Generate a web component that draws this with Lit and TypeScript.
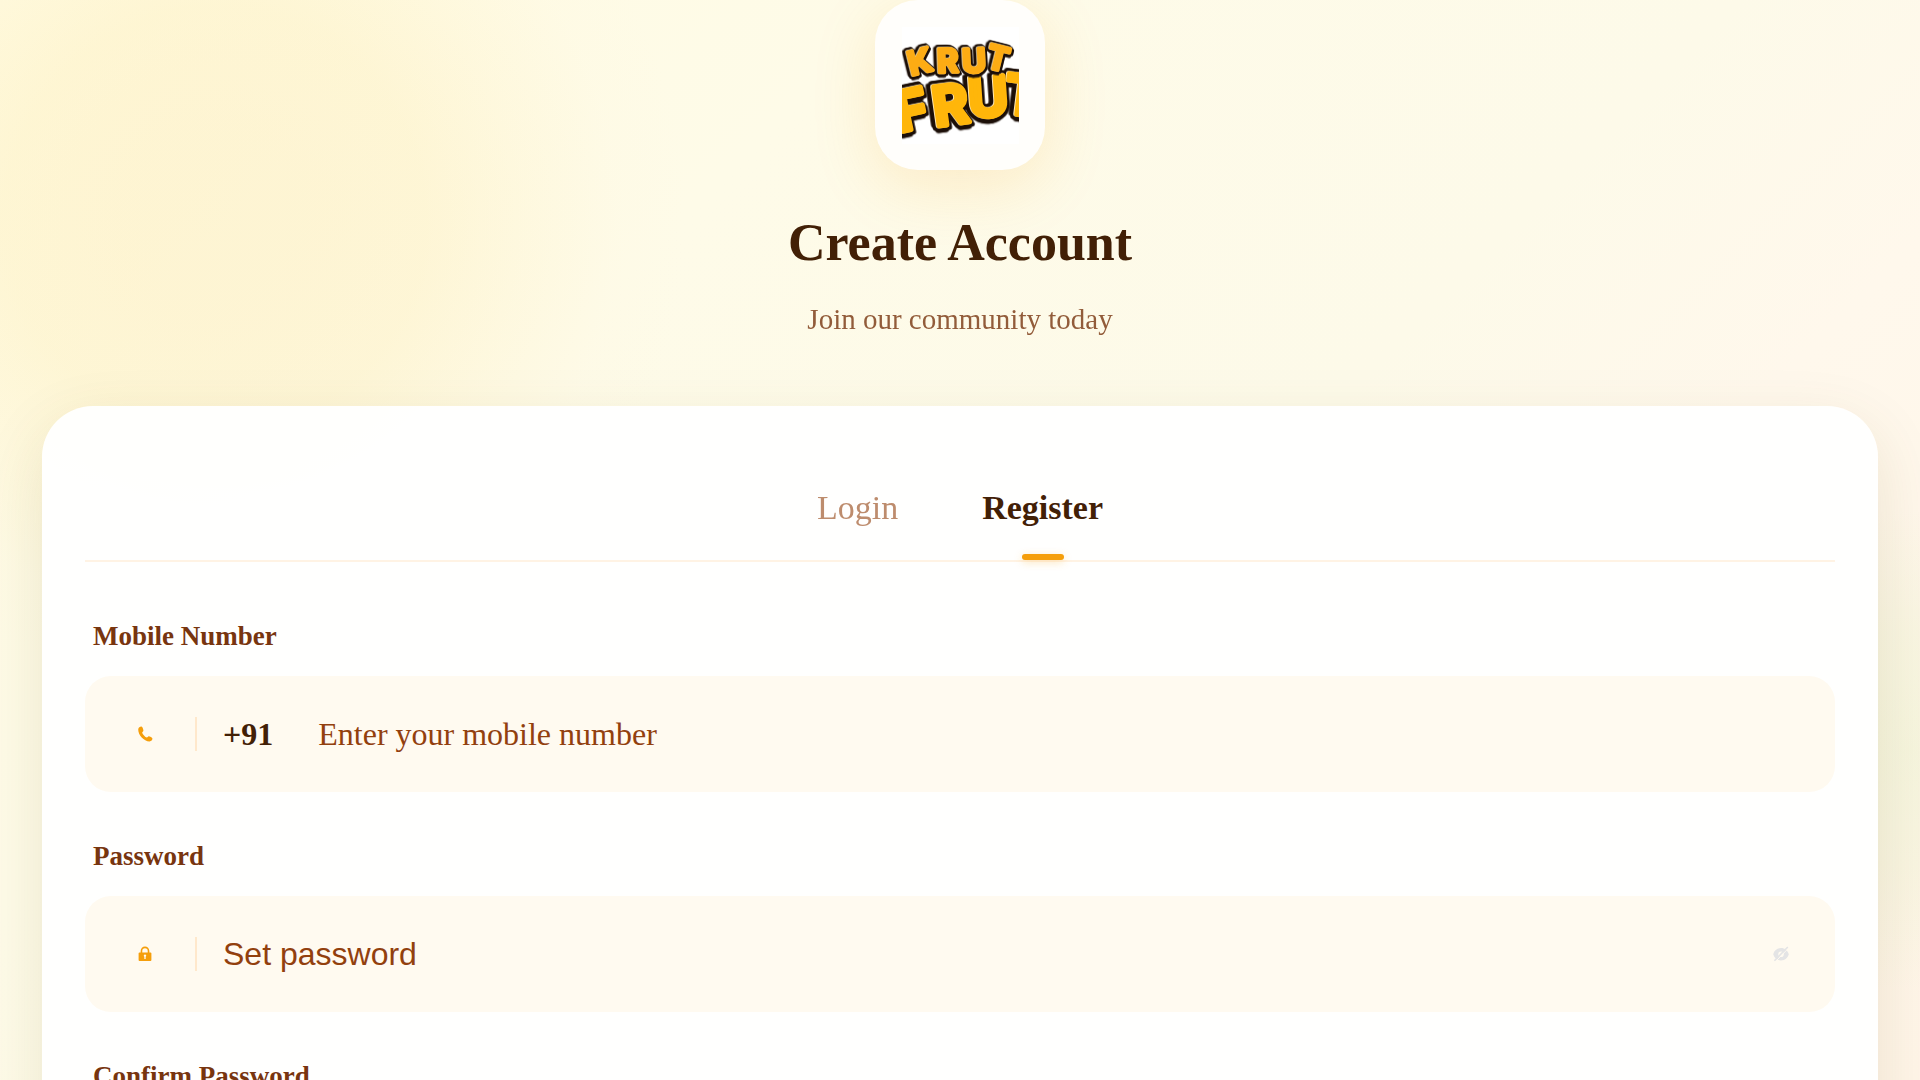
import { LitElement, html, css, svg } from "lit";
import { customElement, property, state } from "lit/decorators.js";

const phoneIcon = svg`<path d="M4.6 .7C3.3 .3 1 1.300 .8 3.600C.7 9.500 6.800 16.200 12.800 16.400C14.700 16.300 16 14.600 15.900 13.300C15.700 12.500 13.200 10.900 12 10.900C11.100 11 10.700 12.200 9.900 12.200C8.400 12 5.300 8.600 5 7.100C5 6.300 6.200 5.900 6.300 5C6.400 3.800 5.400 1 4.600 .7Z"/>`;

const lockIcon = svg`<path fill-rule="evenodd" d="M3.400 6.800V5.200a4.600 4.600 0 0 1 9.200 0v1.600h1.200c.6 0 1 .4 1 1v7.200c0 .6-.4 1-1 1H2.200c-.6 0-1-.4-1-1V7.800c0-.6.4-1 1-1zM5.100 6.800h5.800V5.200a2.900 2.900 0 0 0-5.800 0zM8 9a1.300 1.300 0 0 0-.7 2.400v2.400h1.400v-2.400A1.300 1.300 0 0 0 8 9z"/>`;

@customElement("brand-logo")
export class BrandLogo extends LitElement {
  static styles = css`
    :host {
      display: block;
    }
    .tile {
      display: flex;
      align-items: center;
      justify-content: center;
      width: 170px;
      height: 170px;
      border-radius: 43px;
      background: #fffefb;
      box-shadow: 0 16px 64px rgba(245, 158, 11, 0.16);
    }
    .mark {
      display: block;
      width: 117px;
      height: 117px;
      background: #fff;
    }
    .word {
      font-family: Inter, "Open Sans", sans-serif;
      font-weight: 700;
      text-anchor: middle;
      stroke-linejoin: round;
      fill: #ffb60a;
      stroke: #ffb60a;
    }
    .top {
      font-size: 98px;
      stroke-width: 10px;
      fill: #fdac14;
      stroke: #fdac14;
      filter: drop-shadow(-2px -1px 0 #ffe9b8) drop-shadow(-6px 5px 0 #1c0f08)
        drop-shadow(-4px -6px 0 #1c0f08) drop-shadow(6px 5px 0 #1c0f08);
    }
    .bottom {
      font-size: 164px;
      stroke-width: 14px;
      filter: drop-shadow(-3px -1px 0 #ffe9b8) drop-shadow(-9px 7px 0 #1c0f08)
        drop-shadow(-5px -9px 0 #1c0f08) drop-shadow(8px 7px 0 #1c0f08);
    }
  `;

  render() {
    return html`
      <div class="tile">
        <svg class="mark" viewBox="126 80 351 351" role="img" aria-label="Krut Frut">
          <g class="word bottom">
            <text transform="translate(166 386) rotate(-12)">F</text>
            <text transform="translate(280 372) rotate(-8)">R</text>
            <text transform="translate(388 348) rotate(-4)">U</text>
            <text transform="translate(482 344) rotate(7)">T</text>
          </g>
          <g class="word top">
            <text transform="translate(188 218) rotate(-14)">K</text>
            <text transform="translate(265 216) rotate(-2)">R</text>
            <text transform="translate(344 216) rotate(-3)">U</text>
            <text transform="translate(406 208) rotate(14)">T</text>
          </g>
        </svg>
      </div>
    `;
  }
}

@customElement("form-field")
export class FormField extends LitElement {
  @property() label = "";
  @property() kind = "password";
  @property() hint = "";
  @property() code = "";
  @state() private revealed = false;

  static styles = css`
    :host {
      display: flex;
      flex-direction: column;
      gap: 24px;
    }
    .label {
      padding-left: 8px;
      font-size: 27px;
      line-height: 32px;
      font-weight: 700;
      color: #78350f;
    }
    .box {
      display: flex;
      align-items: center;
      height: 116px;
      padding: 0 42px;
      box-sizing: border-box;
      border-radius: 26px;
      background: #fffaf0;
    }
    .lead {
      display: flex;
      justify-content: center;
      width: 36px;
      margin-right: 32px;
    }
    .icon {
      display: block;
      width: 16px;
      height: 16px;
      fill: #f59e0b;
    }
    .rule {
      width: 2px;
      height: 34px;
      margin-right: 26px;
      background: #ffe8cc;
    }
    .code {
      margin-right: 45px;
      font-size: 32px;
      line-height: 40px;
      font-weight: 700;
      color: #422006;
    }
    .input {
      flex: 1;
      min-width: 0;
      padding: 0;
      border: 0;
      outline: 0;
      background: transparent;
      font-family: "Liberation Serif", serif;
      font-size: 32px;
      line-height: 40px;
      color: #422006;
    }
    .input[type="password"] {
      font-family: "Liberation Sans", sans-serif;
    }
    .input::placeholder {
      color: #92400e;
      opacity: 1;
    }
    .toggle {
      display: flex;
      padding: 4px;
      border: 0;
      background: none;
      cursor: pointer;
    }
    .eye {
      display: block;
      width: 16px;
      height: 16px;
    }
  `;

  private toggle() {
    this.revealed = !this.revealed;
  }

  render() {
    const phone = this.kind === "tel";
    return html`
      <label class="label" for="control">${this.label}</label>
      <div class="box">
        <span class="lead">
          <svg class="icon" viewBox="0 0 16 17" aria-hidden="true">${phone ? phoneIcon : lockIcon}</svg>
        </span>
        <span class="rule"></span>
        ${this.code ? html`<span class="code">${this.code}</span>` : ""}
        <input
          class="input"
          id="control"
          type=${this.revealed ? "text" : this.kind}
          placeholder=${this.hint}
        />
        ${phone
          ? ""
          : html`<button class="toggle" type="button" aria-label="Show password" @click=${this.toggle}>
              <svg class="eye" viewBox="0 0 16 16" aria-hidden="true">
                <path
                  fill="#e4e4e5"
                  fill-rule="evenodd"
                  d="M8 2C4.200 2 1.200 4.600 .2 8.200c1 3.600 4 6.200 7.800 6.200s6.800-2.600 7.800-6.200C14.800 4.600 11.800 2 8 2zM8 5.400a2.800 2.800 0 1 1 0 5.600a2.800 2.800 0 0 1 0-5.600z"
                />
                <path d="M2.600 15.400L15.400 2.200" stroke="#fffaf0" stroke-width="1" />
                <path d="M1.400 14.800L14.800 1" stroke="#e4e4e5" stroke-width="1.600" />
              </svg>
            </button>`}
      </div>
    `;
  }
}

@customElement("app-root")
export class AppRoot extends LitElement {
  @state() private tab = "Register";

  static styles = css`
    :host {
      display: block;
      height: 100vh;
      overflow-y: auto;
      scrollbar-width: none;
      font-family: "Liberation Serif", serif;
      background:
        radial-gradient(
          circle at 216px 218px,
          rgba(250, 230, 170, 0.3) 0,
          rgba(252, 228, 165, 0.28) 100px,
          rgba(252, 230, 165, 0.26) 210px,
          rgba(253, 234, 180, 0.16) 310px,
          rgba(254, 243, 215, 0.08) 400px,
          rgba(254, 243, 215, 0) 470px
        ),
        radial-gradient(
          circle at calc(100% - 10px) 750px,
          rgba(240, 244, 214, 0.6) 0,
          rgba(242, 244, 216, 0.45) 120px,
          rgba(250, 246, 226, 0) 240px
        ),
        linear-gradient(135deg, #fffbe2 0%, #fefbe8 30%, #fdfae9 58%, #fff8ec 72%, #fff5e8 100%);
    }
    .page {
      display: flex;
      flex-direction: column;
    }
    .header {
      display: flex;
      flex-direction: column;
      align-items: center;
      margin-bottom: 70px;
    }
    .title {
      margin: 43px 0 29px;
      font-size: 52px;
      line-height: 60px;
      font-weight: 700;
      color: #422006;
    }
    .subtitle {
      margin: 0;
      font-size: 29px;
      line-height: 34px;
      color: #78350f;
      opacity: 0.8;
    }
    .card {
      margin: 0 42px;
      padding: 43px;
      border-radius: 51px;
      background: rgba(255, 255, 255, 0.95);
      box-shadow: 0 21px 64px rgba(100, 80, 20, 0.12);
    }
    .tabs {
      display: flex;
      justify-content: center;
      gap: 84px;
      padding-top: 39px;
      border-bottom: 2px solid #fff3e4;
    }
    .tab {
      position: relative;
      padding: 0 0 32px;
      border: 0;
      background: none;
      font-family: inherit;
      font-size: 34px;
      line-height: 40px;
      color: #92400e;
      cursor: pointer;
    }
    .tab .name {
      opacity: 0.6;
    }
    .tab.active {
      font-weight: 700;
      color: #422006;
    }
    .tab.active .name {
      opacity: 1;
    }
    .tab.active::after {
      content: "";
      position: absolute;
      left: 50%;
      bottom: 0;
      width: 42px;
      height: 6px;
      margin-left: -21px;
      border-radius: 3px;
      background: #f59e0b;
      box-shadow: 0 2px 8px rgba(245, 158, 11, 0.3);
    }
    .form {
      display: flex;
      flex-direction: column;
      gap: 48px;
      padding-top: 58px;
    }
  `;

  private tabButton(name: string) {
    return html`<button
      class="tab ${this.tab === name ? "active" : ""}"
      type="button"
      role="tab"
      aria-selected=${this.tab === name}
      @click=${() => (this.tab = name)}
    >
      <span class="name">${name}</span>
    </button>`;
  }

  render() {
    return html`
      <main class="page">
        <header class="header">
          <brand-logo></brand-logo>
          <h1 class="title">Create Account</h1>
          <p class="subtitle">Join our community today</p>
        </header>
        <section class="card">
          <div class="tabs" role="tablist">${this.tabButton("Login")}${this.tabButton("Register")}</div>
          <form class="form">
            <form-field
              label="Mobile Number"
              kind="tel"
              code="+91"
              hint="Enter your mobile number"
            ></form-field>
            <form-field label="Password" hint="Set password"></form-field>
            <form-field label="Confirm Password"></form-field>
          </form>
        </section>
      </main>
    `;
  }
}
